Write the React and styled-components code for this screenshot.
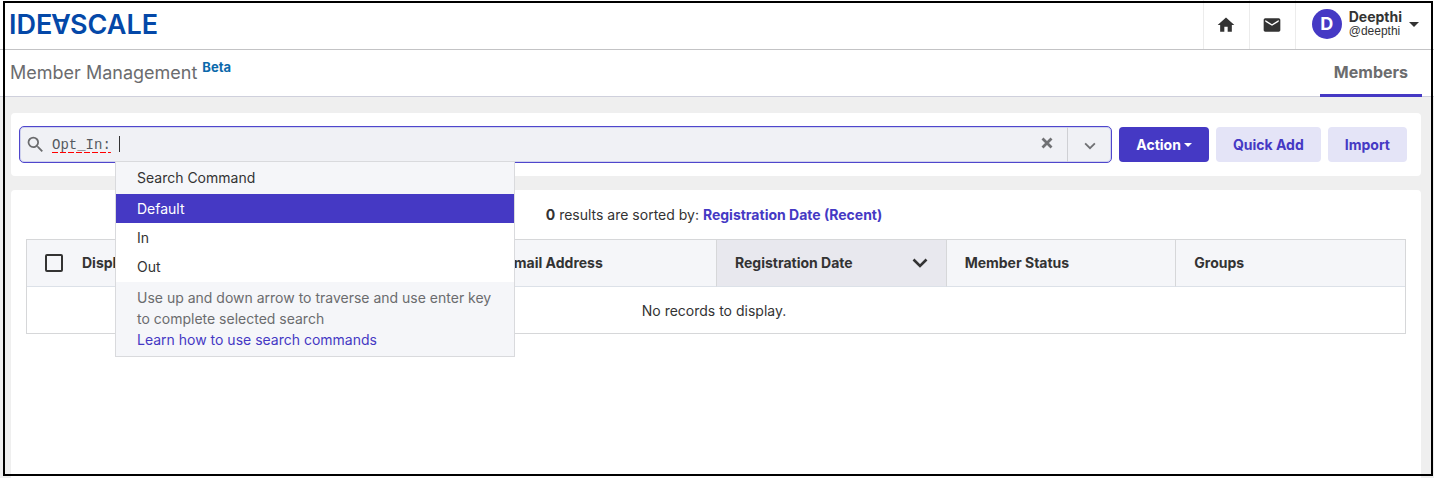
import React, { useState } from "react"
import styled, { createGlobalStyle } from "styled-components"
import { MdHome, MdEmail, MdSearch } from "react-icons/md"

const GlobalStyle = createGlobalStyle`
  * {
    box-sizing: border-box;
  }
  body {
    margin: 0;
    background: #efefef;
    color: #333;
    font-family: Inter, "Liberation Sans", sans-serif;
    font-size: 14px;
    line-height: 21px;
  }
  button, input {
    font: inherit;
  }
  a {
    color: #4539c4;
    text-decoration: none;
  }
`;

const Page = styled.div`
  display: flex;
  flex-direction: column;
  height: 100vh;
  overflow: hidden;
`;

const Frame = styled.div`
  position: fixed;
  inset: 1px 1px 2px 3px;
  border: 2px solid #000;
  pointer-events: none;
  z-index: 10;
`;

const Header = styled.header`
  display: flex;
  justify-content: space-between;
  height: 50px;
  flex: none;
  padding: 0 14px 0 9px;
  background: #fff;
  border-bottom: 1px solid #c3c3c5;
`;

const Logo = styled.a`
  color: #0448a8;
  font-size: 27px;
  font-weight: 600;
  line-height: 50px;
  display: flex;
`;

const Turned = styled.span`
  height: 50px;
  margin: 0 -1px;
  transform: rotate(180deg);
  transform-origin: 50% 24px;
`;

const HeaderNav = styled.nav`
  display: flex;
`;

const IconLink = styled.a`
  display: flex;
  align-items: center;
  justify-content: center;
  width: 46px;
  border-left: 1px solid #ececec;
  color: #333;
  font-size: 20px;
`;

const UserButton = styled.button`
  display: flex;
  align-items: center;
  gap: 7px;
  padding: 0 1px 1px 16px;
  border: 0;
  border-left: 1px solid #ececec;
  background: none;
  color: #333;
  text-align: left;
`;

const Avatar = styled.span`
  width: 30px;
  height: 30px;
  border-radius: 50%;
  background: #4539c4;
  color: #fff;
  font-size: 18px;
  font-weight: 700;
  line-height: 30px;
  text-align: center;
`;

const UserName = styled.span`
  display: flex;
  flex-direction: column;
  font-weight: 700;
  line-height: 15px;
  small {
    font-family: "Liberation Sans", Arial, sans-serif;
    font-size: 12px;
    font-weight: 400;
  }
`;

const Caret = styled.span`
  border: ${({ size }) => size}px solid transparent;
  border-top-color: currentColor;
  border-bottom: 0;
`;

const TitleBar = styled.div`
  display: flex;
  justify-content: space-between;
  height: 47px;
  flex: none;
  padding: 0 12px 0 10px;
  background: #fff;
  border-bottom: 1px solid #cfd0dc;
`;

const Title = styled.h1`
  display: flex;
  gap: 5px;
  margin: 0;
  color: #6b6c6e;
  font-size: 18px;
  font-weight: 400;
  line-height: 46px;
`;

const Beta = styled.span`
  color: #0b69ab;
  font-size: 13px;
  font-weight: 700;
  line-height: 35px;
`;

const Tab = styled.a`
  height: 47px;
  padding: 0 14px;
  border-bottom: 3px solid #4539c4;
  color: #6b6c6e;
  font-size: 16px;
  font-weight: 700;
  line-height: 44px;
`;

const Main = styled.main`
  display: flex;
  flex: 1;
  flex-direction: column;
  gap: 14px;
  padding: 16px 13px 0 11px;
`;

const Toolbar = styled.div`
  display: flex;
  align-items: center;
  gap: 7px;
  padding: 13px 14px 13px 8px;
  background: #fff;
  border-radius: 4px;
`;

const SearchBox = styled.div`
  position: relative;
  display: flex;
  flex: 1;
  height: 37px;
  background: #f0f1f5;
  border: 1px solid #4f46cc;
  border-radius: 5px;
  box-shadow: inset 0 0 0 1px #cfd2ee;
  color: #6b6c6e;
`;

const SearchLabel = styled.label`
  display: flex;
  align-items: center;
  width: 32px;
  padding-left: 5px;
  font-size: 21px;
`;

const Field = styled.div`
  position: relative;
  display: flex;
  flex: 1;
  font-family: "Liberation Mono", "Courier New", monospace;
`;

const SearchInput = styled.input`
  width: 100%;
  padding: 2px 0 0;
  border: 0;
  outline: 0;
  background: none;
  color: #555a60;
`;

/* spelling mark and text cursor, laid over the input */
const Marks = styled.div`
  position: absolute;
  top: 9px;
  left: 0;
  display: flex;
  height: 17px;
  pointer-events: none;
`;

const Misspelled = styled.span`
  width: 7ch;
  margin-right: 1ch;
  background: repeating-linear-gradient(90deg, #f00 0 6px, transparent 6px 8px) bottom / 100% 1px no-repeat;
`;

const TextCursor = styled.span`
  width: 1px;
  height: 16px;
  background: #333;
`;

const BoxButton = styled.button`
  display: flex;
  align-items: center;
  justify-content: center;
  width: ${({ $divided }) => ($divided ? 44 : 40)}px;
  padding: ${({ $divided }) => ($divided ? "3px 0 0" : "0 0 3px")};
  border: 0;
  border-left: ${({ $divided }) => ($divided ? "1px solid #cfd0d4" : "0")};
  background: none;
  color: #707174;
`;

const Button = styled.button`
  display: flex;
  align-items: center;
  gap: 3px;
  height: 35px;
  padding: 0 17px;
  border: 0;
  border-radius: 4px;
  background: ${({ $primary }) => ($primary ? "#4539c4" : "#e4e4f7")};
  color: ${({ $primary }) => ($primary ? "#fff" : "#4539c4")};
  font-weight: 700;
`;

const Suggestions = styled.div`
  position: absolute;
  top: 34px;
  left: 95px;
  z-index: 5;
  width: 400px;
  border: 1px solid #d9dadd;
  background: #fff;
  color: #333;
`;

const SuggestionsTitle = styled.div`
  padding: 0 21px;
  background: #f5f6f9;
  line-height: 32px;
`;

const OptionList = styled.ul`
  margin: 0;
  padding: 0 0 1px;
  list-style: none;
`;

const Option = styled.li`
  padding: 0 21px;
  line-height: 29px;
  cursor: pointer;
  background: ${({ $active }) => ($active ? "#4539c4" : "#fff")};
  color: ${({ $active }) => ($active ? "#fff" : "#333")};
`;

const Hint = styled.div`
  padding: 5px 21px 6px;
  background: #f5f6f9;
  color: #6b6c6e;
  a {
    display: block;
  }
`;

const Results = styled.section`
  flex: 1;
  padding: 14px 15px 0;
  background: #fff;
  border-radius: 4px 4px 0 0;
`;

const Summary = styled.p`
  margin: 0 4px 14px 0;
  text-align: center;
  a {
    font-weight: 700;
  }
`;

const Table = styled.table`
  width: 100%;
  table-layout: fixed;
  border: 1px solid #d6d7d9;
  border-spacing: 0;
`;

const Th = styled.th`
  height: 47px;
  padding: 0 18px 1px;
  border-bottom: 1px solid #dce1e8;
  border-left: ${({ $first }) => ($first ? "0" : "1px solid #d6d7d9")};
  background: ${({ $sorted }) => ($sorted ? "#e8e8ee" : "#f5f6f9")};
  font-weight: 700;
  text-align: left;
`;

const HeadCell = styled.div`
  display: flex;
  align-items: center;
  justify-content: space-between;
`;

const CheckCell = styled.div`
  display: flex;
  align-items: center;
  gap: 19px;
`;

const Checkbox = styled.input`
  appearance: none;
  width: 18px;
  height: 18px;
  margin: 0;
  border: 2px solid #333;
  border-radius: 2px;
  &:checked {
    background: #4539c4;
  }
`;

const EmptyCell = styled.td`
  height: 46px;
  padding: 0 4px 0 0;
  text-align: center;
`;

const Chevron = ({ size, stroke }) => (
  <svg width={size} height={size} viewBox="0 0 16 16" fill="none" stroke="currentColor" strokeWidth={stroke} aria-hidden="true">
    <path d="M1.5 4.5L8 11l6.5-6.5" />
  </svg>
)

const options = ["Default", "In", "Out"];

const App = () => {
  const [query, setQuery] = useState("Opt_In: ");
  const [active, setActive] = useState("Default");

  return (
    <Page>
      <GlobalStyle />
      <Header>
        <Logo href="#" aria-label="IdeaScale">
          IDE<Turned>A</Turned>SCALE
        </Logo>
        <HeaderNav>
          <IconLink href="#home" aria-label="Home"><MdHome /></IconLink>
          <IconLink href="#messages" aria-label="Messages"><MdEmail /></IconLink>
          <UserButton>
            <Avatar>D</Avatar>
            <UserName>
              Deepthi
              <small>@deepthi</small>
            </UserName>
            <Caret size={5} />
          </UserButton>
        </HeaderNav>
      </Header>
      <TitleBar>
        <Title>Member Management <Beta>Beta</Beta></Title>
        <Tab href="#members">Members</Tab>
      </TitleBar>
      <Main>
        <Toolbar>
          <SearchBox>
            <SearchLabel htmlFor="search" aria-label="Search members"><MdSearch /></SearchLabel>
            <Field>
              <SearchInput
                id="search"
                autoComplete="off"
                spellCheck={false}
                value={query}
                onChange={(e) => setQuery(e.target.value)}
              />
              {query === "Opt_In: " && (
                <Marks>
                  <Misspelled />
                  <TextCursor />
                </Marks>
              )}
            </Field>
            <BoxButton aria-label="Clear" onClick={() => setQuery("")}>
              <svg width="12" height="12" viewBox="0 0 12 12" stroke="currentColor" strokeWidth="2.8">
                <path d="M1.5 1.5l9 9M10.5 1.5l-9 9" />
              </svg>
            </BoxButton>
            <BoxButton $divided aria-label="Search options">
              <Chevron size={12} stroke={2.4} />
            </BoxButton>
            <Suggestions>
              <SuggestionsTitle>Search Command</SuggestionsTitle>
              <OptionList role="listbox" aria-label="Search Command">
                {options.map((option) => (
                  <Option
                    key={option}
                    role="option"
                    aria-selected={option === active}
                    $active={option === active}
                    onMouseEnter={() => setActive(option)}
                  >
                    {option}
                  </Option>
                ))}
              </OptionList>
              <Hint>
                Use up and down arrow to traverse and use enter key to complete selected search
                <a href="#help">Learn how to use search commands</a>
              </Hint>
            </Suggestions>
          </SearchBox>
          <Button $primary>Action <Caret size={4} /></Button>
          <Button>Quick Add</Button>
          <Button>Import</Button>
        </Toolbar>
        <Results>
          <Summary>
            <b>0</b> results are sorted by: <a href="#sort">Registration Date (Recent)</a>
          </Summary>
          <Table>
            <thead>
              <tr>
                <Th $first>
                  <CheckCell>
                    <Checkbox type="checkbox" aria-label="Select all members" />
                    Display Name
                  </CheckCell>
                </Th>
                <Th>Username</Th>
                <Th>Email Address</Th>
                <Th $sorted>
                  <HeadCell>Registration Date <Chevron size={16} stroke={2.6} /></HeadCell>
                </Th>
                <Th>Member Status</Th>
                <Th>Groups</Th>
              </tr>
            </thead>
            <tbody>
              <tr>
                <EmptyCell colSpan={6}>No records to display.</EmptyCell>
              </tr>
            </tbody>
          </Table>
        </Results>
      </Main>
      <Frame />
    </Page>
  )
}


export default App
